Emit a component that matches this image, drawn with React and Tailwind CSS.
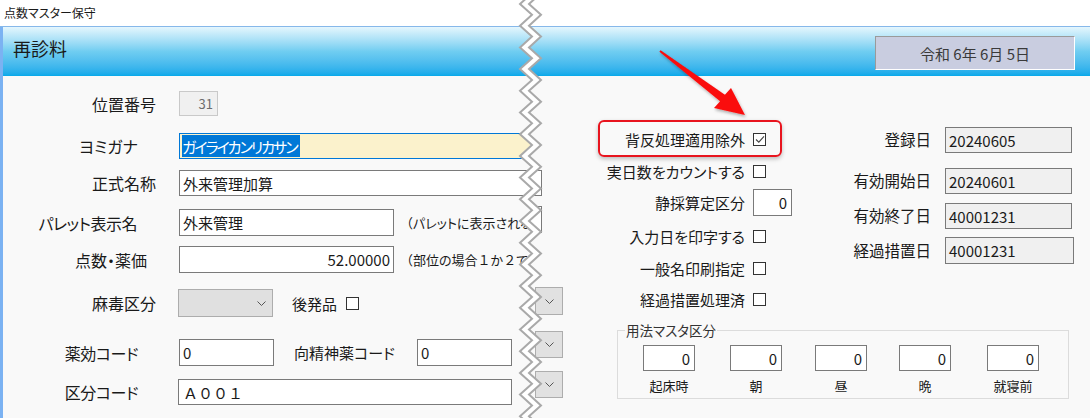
import React from "react";

function CB({ checked }) {
  return (
    <div className="w-[13px] h-[13px] border border-[#333] bg-white flex items-center justify-center shrink-0">
      {checked && (
        <svg width="10" height="9" viewBox="0 0 10 9">
          <polyline points="1,4.5 3.8,7.2 9,1.3" fill="none" stroke="#444" strokeWidth="1.1" />
        </svg>
      )}
    </div>
  );
}

function Chev() {
  return (
    <svg width="9" height="5" viewBox="0 0 9 5">
      <polyline points="0.5,0.5 4.5,4.5 8.5,0.5" fill="none" stroke="#555" strokeWidth="1" />
    </svg>
  );
}

function Overlay() {
  const per = 21.7;
  const L = [];
  for (let k = -1; k < 21; k++) {
    L.push([520, 4 + k * per]);
    L.push([532, 14.85 + k * per]);
  }
  const R = L.map(([x, y]) => [x + 9, y]);
  const poly = [...L, ...R.slice().reverse()].map((p) => p.join(",")).join(" ");
  const lp = L.map((p) => p.join(",")).join(" ");
  const rp = R.map((p) => p.join(",")).join(" ");
  return (
    <svg className="absolute left-0 top-0 pointer-events-none" width="1090" height="418" viewBox="0 0 1090 418">
      <defs>
        <filter id="sh" x="-20%" y="-20%" width="140%" height="140%">
          <feDropShadow dx="1" dy="2" stdDeviation="1.5" floodColor="#000" floodOpacity="0.3" />
        </filter>
      </defs>
      <polygon points={poly} fill="#ffffff" />
      <polyline points={lp} fill="none" stroke="#a9a9a9" strokeWidth="2" />
      <polyline points={rp} fill="none" stroke="#a9a9a9" strokeWidth="2" />
      <polygon
        filter="url(#sh)"
        fill="#fa0d0d"
        points="660.6,50.2 724.9,94.8 731,88 745,115 714,108 720.1,101.2 659.4,51.8"
      />
    </svg>
  );
}

export default function App() {
  return (
    <div className="relative w-[1090px] h-[418px] overflow-hidden bg-white text-[#1a1a1a] font-['Noto_Sans_CJK_JP',sans-serif] [font-feature-settings:'palt']">
      <div className="h-[27px] border-b border-[#86b8ea] flex items-center pl-[4px] text-[12px] leading-none">
        点数マスター保守
      </div>
      <div className="flex flex-col h-[391px] border-l-[3px] border-[#7bb2f2]">
        <div className="h-[49px] shrink-0 flex justify-between bg-linear-to-b from-[#e4f6fd] via-[#6fcdf1] to-[#04a9ea]">
          <div className="ml-[10px] mt-[12px] text-[18px] leading-[18px] text-[#1a1a1a]">再診料</div>
          <div className="mt-[9px] mr-[15px] w-[200px] h-[34px] bg-[#c9cde0] border border-t-[#9a9a9a] border-l-[#9a9a9a] border-r-white border-b-white flex items-center justify-center text-[15px] leading-none text-[#3a3a3a]">
            令和 6年 6月 5日
          </div>
        </div>
        <div className="flex-1 flex bg-[#f9f9f9]">
          {/* left panel */}
          <div className="w-[527px] shrink-0 overflow-hidden flex flex-col text-[16px] leading-none">
            <div className="flex items-center mt-[15px] h-[25px]">
              <div className="w-[153px] shrink-0 text-right">位置番号</div>
              <div className="ml-[23px] w-[39px] h-[25px] shrink-0 bg-[#f0f0f0] border border-[#c9c9c9] flex items-center justify-end pr-[4px] text-[13px] text-[#6d6d6d]">31</div>
            </div>
            <div className="flex items-center mt-[17px] h-[26px]">
              <div className="w-[153px] shrink-0 text-right pr-[18px] whitespace-nowrap">ヨミガナ</div>
              <div className="ml-[23px] w-[400px] shrink-0 h-[26px] bg-[#fbf2cc] border border-[#0078d7] flex items-center">
                <span className="ml-[2px] h-[22px] flex items-center bg-[#0078d7] text-white text-[15px] tracking-[-2px] pr-[3px] whitespace-nowrap">ガイライカンリカサン</span>
              </div>
            </div>
            <div className="flex items-center mt-[11px] h-[26px]">
              <div className="w-[153px] shrink-0 text-right">正式名称</div>
              <div className="ml-[23px] w-[400px] shrink-0 h-[26px] bg-white border border-[#7a7a7a] flex items-center pl-[3px] text-[15px] whitespace-nowrap">外来管理加算</div>
            </div>
            <div className="flex items-center mt-[13px] h-[27px]">
              <div className="w-[153px] shrink-0 text-right pr-[19px] whitespace-nowrap tracking-[-0.5px]">パレット表示名</div>
              <div className="ml-[23px] w-[215px] h-[27px] bg-white border border-[#7a7a7a] flex items-center pl-[3px] text-[15px] shrink-0">外来管理</div>
              <div className="ml-[6px] text-[13px] whitespace-nowrap shrink-0">
                <span className="[font-feature-settings:normal]">（</span>パレットに表示される文字）
              </div>
            </div>
            <div className="flex items-center mt-[10px] h-[27px]">
              <div className="w-[153px] shrink-0 text-right pr-[9px] whitespace-nowrap">点数・薬価</div>
              <div className="ml-[23px] w-[215px] h-[27px] bg-white border border-[#7a7a7a] flex items-center justify-end pr-[3px] text-[15px] shrink-0">52.00000</div>
              <div className="ml-[6px] text-[13px] whitespace-nowrap shrink-0">
                <span className="[font-feature-settings:normal]">（</span>部位の場合<span className="[font-feature-settings:normal]">１</span>か<span className="[font-feature-settings:normal]">２</span>で入力）
              </div>
            </div>
            <div className="flex items-center mt-[16px] h-[28px]">
              <div className="w-[153px] shrink-0 text-right">麻毒区分</div>
              <div className="ml-[22px] w-[95px] h-[28px] bg-[#e0e0e0] border border-[#adadad] flex items-center justify-end pr-[6px] shrink-0">
                <Chev />
              </div>
              <div className="ml-[19px] text-[15px]">後発品</div>
              <div className="ml-[9px]">
                <CB />
              </div>
            </div>
            <div className="flex items-center mt-[22px] h-[27px]">
              <div className="w-[153px] shrink-0 text-right pr-[18px] whitespace-nowrap tracking-[-0.5px]">薬効コード</div>
              <div className="ml-[23px] w-[95px] h-[27px] bg-white border border-[#7a7a7a] flex items-center pl-[3px] text-[15px] shrink-0">0</div>
              <div className="ml-[20px] w-[123px] text-[15px] whitespace-nowrap shrink-0">向精神薬コード</div>
              <div className="w-[95px] h-[27px] bg-white border border-[#7a7a7a] flex items-center pl-[3px] text-[15px] shrink-0">0</div>
            </div>
            <div className="flex items-center mt-[13px] h-[26px]">
              <div className="w-[153px] shrink-0 text-right pr-[18px] whitespace-nowrap tracking-[-0.5px]">区分コード</div>
              <div className="ml-[22px] w-[334px] h-[26px] bg-white border border-[#7a7a7a] flex items-center pl-[4px] text-[15px] shrink-0 [font-feature-settings:normal]">Ａ００１</div>
            </div>
          </div>

          {/* right panel */}
          <div className="flex-1 flex">
            <div className="w-[35px] shrink-0 flex flex-col">
              <div className="mt-[94px] w-[12px] h-[26px] bg-white border-y border-r border-[#7a7a7a]"></div>
              <div className="mt-[10px] w-[12px] h-[27px] bg-white border-y border-r border-[#7a7a7a]"></div>
              <div className="mt-[54px] ml-[5px] w-[28px] h-[28px] bg-[#e1e1e1] border border-[#adadad] flex items-center justify-center"><Chev /></div>
              <div className="mt-[16px] ml-[5px] w-[28px] h-[27px] bg-[#e1e1e1] border border-[#adadad] flex items-center justify-center"><Chev /></div>
              <div className="mt-[13px] ml-[5px] w-[28px] h-[27px] bg-[#e1e1e1] border border-[#adadad] flex items-center justify-center"><Chev /></div>
            </div>
            <div className="flex-1 flex flex-col">
              <div className="flex h-[236px]">
                <div className="w-[227px] shrink-0 flex flex-col pt-[50px] text-[15px] leading-none">
                  <div className="flex items-center h-[26px]">
                    <div className="w-[180px] text-right whitespace-nowrap">背反処理適用除外</div>
                    <div className="ml-[8px]"><CB checked /></div>
                  </div>
                  <div className="flex items-center h-[26px] mt-[6px]">
                    <div className="w-[180px] text-right whitespace-nowrap">実日数をカウントする</div>
                    <div className="ml-[8px]"><CB /></div>
                  </div>
                  <div className="flex items-center h-[27px] mt-[5px]">
                    <div className="w-[180px] text-right whitespace-nowrap">静採算定区分</div>
                    <div className="ml-[8px] w-[39px] h-[27px] bg-white border border-[#7a7a7a] flex items-center justify-end pr-[4px]">0</div>
                  </div>
                  <div className="flex items-center h-[26px] mt-[7px]">
                    <div className="w-[180px] text-right whitespace-nowrap">入力日を印字する</div>
                    <div className="ml-[8px]"><CB /></div>
                  </div>
                  <div className="flex items-center h-[26px] mt-[6px]">
                    <div className="w-[180px] text-right whitespace-nowrap">一般名印刷指定</div>
                    <div className="ml-[8px]"><CB /></div>
                  </div>
                  <div className="flex items-center h-[26px] mt-[5px]">
                    <div className="w-[180px] text-right whitespace-nowrap">経過措置処理済</div>
                    <div className="ml-[8px]"><CB /></div>
                  </div>
                </div>
                <div className="flex-1 flex flex-col pt-[51px] text-[15.5px] leading-none">
                  <div className="flex items-center h-[26px]">
                    <div className="w-[139px] text-right">登録日</div>
                    <div className="ml-[14px] w-[127px] h-[26px] bg-[#f0f0f0] border border-[#7a7a7a] flex items-center pl-[3px] text-[15px]">20240605</div>
                  </div>
                  <div className="flex items-center h-[26px] mt-[15px]">
                    <div className="w-[139px] text-right">有効開始日</div>
                    <div className="ml-[14px] w-[127px] h-[26px] bg-[#f0f0f0] border border-[#7a7a7a] flex items-center pl-[3px] text-[15px]">20240601</div>
                  </div>
                  <div className="flex items-center h-[26px] mt-[9px]">
                    <div className="w-[139px] text-right">有効終了日</div>
                    <div className="ml-[14px] w-[127px] h-[26px] bg-[#f0f0f0] border border-[#7a7a7a] flex items-center pl-[3px] text-[15px]">40001231</div>
                  </div>
                  <div className="flex items-center h-[27px] mt-[8px]">
                    <div className="w-[139px] text-right">経過措置日</div>
                    <div className="ml-[14px] w-[129px] h-[27px] bg-[#f0f0f0] border border-[#7a7a7a] flex items-center pl-[3px] text-[15px]">40001231</div>
                  </div>
                </div>
              </div>
              <fieldset className="mt-[10px] ml-[52px] w-[452px] border border-[#dcdcdc] pb-[4px]">
                <legend className="ml-[7px] px-[1px] text-[13.5px] leading-[16px] text-[#333]">用法マスタ区分</legend>
                <div className="flex pl-[25px] mt-[7px] text-[13px] leading-[16px]">
                  {[
                    ["起床時", "ml-[0px]"],
                    ["朝", "ml-[35px]"],
                    ["昼", "ml-[33px]"],
                    ["晩", "ml-[32px]"],
                    ["就寝前", "ml-[36px]"],
                  ].map(([t, m]) => (
                    <div key={t} className={"w-[52px] flex flex-col items-center " + m}>
                      <div className="w-[52px] h-[26px] bg-white border border-[#7a7a7a] flex items-center justify-end pr-[4px] text-[15px] leading-none">0</div>
                      <div className="mt-[7px]">{t}</div>
                    </div>
                  ))}
                </div>
              </fieldset>
            </div>
          </div>
        </div>
      </div>

      <div className="absolute left-[598px] top-[120px] w-[184px] h-[37px] border-2 border-[#e8141e] rounded-[6px] shadow-[0_2px_4px_rgba(0,0,0,0.25)] pointer-events-none"></div>
      <Overlay />
    </div>
  );
}
